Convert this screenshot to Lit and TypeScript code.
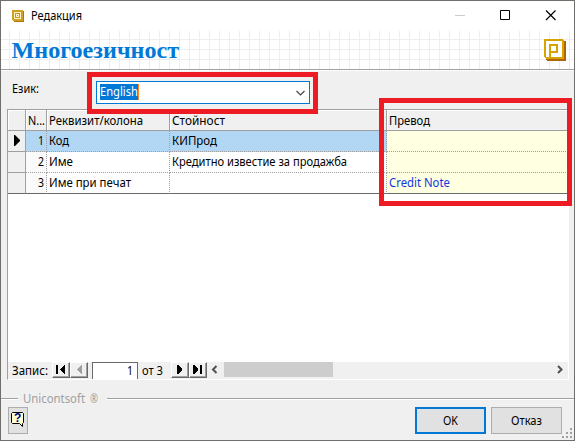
import { LitElement, html, css, svg } from "lit";
import { customElement } from "lit/decorators.js";

const rows = [
  { n: 1, name: "Код", value: "КИПрод", tr: "" },
  { n: 2, name: "Име", value: "Кредитно известие за продажба", tr: "" },
  { n: 3, name: "Име при печат", value: "", tr: "Credit Note" },
];

// Wraps a label so its rendered width stays fixed across fonts.
const label = (text: string, w: number, cls = "") => html`<svg class="t ${cls}" width=${w} height="18" overflow="visible">
  ${svg`<text x="0" y="13" textLength=${w} lengthAdjust="spacingAndGlyphs">${text}</text>`}
</svg>`;
const widths: Record<string, number> = {
  "Код": 20, "КИПрод": 45, "Име": 24, "Кредитно известие за продажба": 175,
  "Име при печат": 82, "Credit Note": 61,
};

@customElement("app-root")
export class AppRoot extends LitElement {
  static styles = css`
    :host { display: block; width: 575px; height: 441px; font: 12px "Noto Sans", "Open Sans", sans-serif; color: #000; }
    * { box-sizing: border-box; }
    svg { display: block; flex: none; }
    .t { fill: currentColor; }
    .window { position: relative; height: 441px; border: 1px solid #706f6a; background: #f0f0f0; display: flex; flex-direction: column; overflow: hidden; }
    .titlebar { height: 30px; flex: none; background: #fff; display: flex; align-items: center; padding-left: 11px; }
    .titlebar .t { margin-left: 7px; }
    .controls { margin-left: auto; }
    .banner { height: 39px; flex: none; border-bottom: 1px solid #a0a0a0; display: flex; justify-content: space-between; padding: 8px 8px 0 10px;
      background: repeating-linear-gradient(90deg, transparent 0 8px, #eee 8px 9px, transparent 9px 10px), repeating-linear-gradient(180deg, #fff 0 8px, #eee 8px 9px, #fff 9px 10px); }
    .heading { fill: #0078d7; font: bold 24px "Liberation Serif", serif; }
    .language { height: 39px; flex: none; border-top: 1px solid #fff; display: flex; padding: 10px 0 0 11px; }
    .combo { width: 214px; height: 23px; margin-left: 57px; border: 1px solid #0078d7; background: #fff; display: flex; padding: 2px 4px 0 3px; justify-content: space-between; }
    .selection { background: #0078d7; color: #fff; height: 16px; width: 39px; border-right: 1px solid #ff8728; }
    .language > .t { margin-top: -1px; }
    .selection .t { margin-top: -1px; }
    .grid { margin: 0 5px 0 6px; width: 562px; height: 271px; flex: none; border: solid #a0a0a0; border-width: 1px 0 0 1px; border-right: 1px solid #fff; border-bottom: 1px solid #fff; background: #fff; display: flex; flex-direction: column; }
    .row { display: grid; grid-template-columns: 18px 21px 123px 217px 1fr; height: 21px; flex: none; }
    .cell { border-right: 1px dotted #a0a0a0; border-bottom: 1px dotted #a0a0a0; padding: 2px 0 0 2px; overflow: hidden; }
    .cell:last-child { border-right: 0; }
    .cell .t { margin-top: -1px; }
    .head .t { margin-top: 0; }
    .head .cell { background: #f0f0f0; border: solid #a0a0a0; border-width: 0 1px 1px 0; box-shadow: inset 1px 1px #fff; }
    .head .cell:last-child { border-right: 0; }
    .row .gutter { background: #f0f0f0; border: solid #a0a0a0; border-width: 0 1px 1px 0; padding: 4px 0 0 5px; }
    .num { background: #fafafa; padding: 2px 2px 0 0; display: flex; justify-content: flex-end; }
    .current .cell:not(.gutter) { background: #b2d7f5; }
    .row .tr, .current .tr.cell:not(.gutter) { background: #ffffe1; color: #1238e0; }
    .last .cell { border-bottom: 1px solid #696969; }
    .nav { margin-top: auto; height: 17px; background: #f0f0f0; display: flex; padding-left: 4px; }
    .btn { width: 18px; height: 16px; background: #f0f0f0; border: 1px solid; border-color: #fff #696969 #696969 #fff; box-shadow: inset -1px -1px #a0a0a0; }
    .controls-left { display: flex; margin-left: 4px; }
    .controls-right { display: flex; margin-left: 8px; }
    .page { width: 46px; height: 17px; margin: 0 4px 0 4px; border: solid #696969; border-width: 1px 1px 0 1px; background: #fff; display: flex; justify-content: flex-end; padding-right: 4px; }
    .page .t { margin-top: -1px; }
    .scroll { flex: 1; display: flex; justify-content: space-between; margin-left: 4px; }
    .thumb { width: 109px; height: 15px; background: #cdcdcd; margin: 0 auto 0 6px; }
    .brand { display: flex; height: 18px; margin-top: 10px; color: #a0a0a0; align-items: center; gap: 5px; }
    .line { height: 2px; border-top: 1px solid #a0a0a0; border-bottom: 1px solid #fff; flex: none; width: 17px; }
    .line.rest { flex: 1; margin-left: 4px; }
    .actions { display: flex; margin-top: -1px; padding-left: 7px; }
    .help { width: 20px; height: 27px; border: 1px solid #adadad; background: #e1e1e1; padding: 4px 0 0 2px; }
    .help text { font: bold 12px "Liberation Sans", sans-serif; fill: #000080; }
    .button { width: 71px; height: 27px; border: 1px solid #adadad; background: #e1e1e1; display: flex; justify-content: center; padding-top: 4px; margin-left: 5px; }
    .button.ok { border: 2px solid #0078d7; margin-left: 387px; padding-top: 3px; }
    .mark { position: absolute; border: 5px solid #ed1c24; pointer-events: none; }
    .mark.a { left: 86px; top: 71px; width: 231px; height: 42px; }
    .mark.b { left: 378px; top: 97px; width: 193px; height: 108px; }
    .grip { position: absolute; right: 2px; bottom: 2px; }
  `;

  logo() {
    return html`<svg width="22" height="22" shape-rendering="crispEdges">
      <path d="M2 2h19l1 1v19H3l-1-1z" fill="#b06500"/><path d="M0 0h19l1 2v18H2l-2-2z" fill="#d6a300"/>
      <path d="M2 2h16v16H7v-4h7V5H5v13H2z" fill="#fff"/><path d="M7 7h5v5H7z" fill="#fff"/>
    </svg>`;
  }
  smallLogo() {
    return html`<svg width="12" height="12" shape-rendering="crispEdges">
      <path d="M1 1h10l1 1v10H2l-1-1z" fill="#b07808"/><path d="M0 0h10l1 1v10H1l-1-1z" fill="#d0a020"/>
      <path d="M2 2h7v7H2z" fill="#fff3c8"/><path d="M3 3h5v5H3z" fill="#c9961a"/><path d="M4 4h3v3H4z" fill="#fff3c8"/><path d="M5 5h1v1H5z" fill="#c9961a"/>
    </svg>`;
  }
  nav(kind: string) {
    const d: Record<string, string> = {
      first: "M3 3h2v9h-2zM12 3v9h-1L7 8V7l4-4z", prev: "M11 3v9h-1L6 8V7l4-4z",
      next: "M5 3v9h1l4-4V7L6 3z", last: "M3 3v9h1l4-4V7L4 3zM10 3h2v9h-2z",
    };
    return html`<div class="btn"><svg width="16" height="14" viewBox="0 0 16 14"><path transform="translate(0 -1)" shape-rendering="crispEdges" fill=${kind === "prev" ? "#a0a0a0" : "#000"} d=${d[kind]}/></svg></div>`;
  }
  render() {
    return html`<div class="window">
      <div class="titlebar">${this.smallLogo()}${label("Редакция", 51)}
        <svg class="controls" width="119" height="30" fill="none">
          <path d="M0 14.5h10" stroke="#ccc"/><path d="M45.5 9.5h9v9h-9z" stroke="#000"/><path d="M91 9.500l9.500 9.500M100.500 9.500L91 19" stroke="#000" stroke-width="1.200"/>
        </svg></div>
      <div class="banner"><svg width="170" height="28" overflow="visible"><text class="heading" x="0.500" y="19" textLength="167.500" lengthAdjust="spacingAndGlyphs">Многоезичност</text></svg>${this.logo()}</div>
      <div class="language">${label("Език:", 27)}
        <div class="combo"><div class="selection">${label("English", 38)}</div><svg width="9" height="18"><path d="M.5 7l4 4 4-4" fill="none" stroke="#444" stroke-width="1.200"/></svg></div></div>
      <div class="grid">
        <div class="row head"><div class="cell"></div><div class="cell">${label("N...", 17)}</div><div class="cell">${label("Реквизит/колона", 94)}</div><div class="cell">${label("Стойност", 53)}</div><div class="cell">${label("Превод", 41)}</div></div>
        ${rows.map((r, i) => html`<div class="row ${i === 0 ? "current" : ""} ${i === 2 ? "last" : ""}">
          <div class="cell gutter">${i === 0 ? html`<svg width="8" height="12"><path d="M1 0h1l5 5v1l-5 5H1z"/></svg>` : ""}</div>
          <div class="cell num">${label(String(r.n), 6)}</div>
          <div class="cell">${label(r.name, widths[r.name])}</div>
          <div class="cell">${r.value ? label(r.value, widths[r.value]) : ""}</div>
          <div class="cell tr">${r.tr ? label(r.tr, widths[r.tr]) : ""}</div></div>`)}
        <div class="nav">${label("Запис:", 36)}<div class="controls-left">${this.nav("first")}${this.nav("prev")}</div>
          <div class="page">${label("1", 6)}</div>${label("от 3", 21)}<div class="controls-right">${this.nav("next")}${this.nav("last")}</div>
          <div class="scroll"><svg width="7" height="16"><path d="M5.500 4L2 7.500 5.500 11" fill="none" stroke="#505050" stroke-width="2"/></svg><div class="thumb"></div>
          <svg width="12" height="16"><path d="M2 4l3.500 3.500L2 11" fill="none" stroke="#505050" stroke-width="2"/></svg></div></div>
      </div>
      <div class="brand"><div class="line"></div>${label("Unicontsoft", 62)}${label("®", 8)}<div class="line rest"></div></div>
      <div class="actions"><div class="help"><svg width="14" height="16"><path d="M1.500.500h10l1 1v9l-1 1v3l-3-3h-7l-1-1v-9z" fill="#ffffd0" stroke="#000"/><text x="3" y="10">?</text></svg></div>
        <div class="button ok">${label("OK", 15)}</div><div class="button">${label("Отказ", 31)}</div></div>
      <div class="mark a"></div><div class="mark b"></div>
      <svg class="grip" width="10" height="10" fill="#a0a0a0"><path d="M8 0h2v2H8zM4 4h2v2H4zM8 4h2v2H8zM0 8h2v2H0zM4 8h2v2H4zM8 8h2v2H8z"/></svg>
    </div>`;
  }
}
